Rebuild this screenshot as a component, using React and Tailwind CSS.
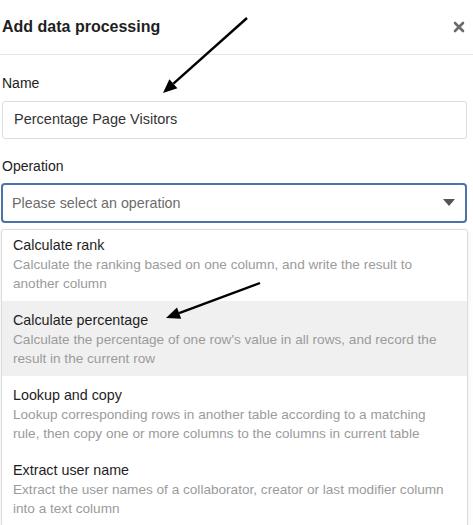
import React from 'react';

const options = [
  {
    title: 'Calculate rank',
    lines: ['Calculate the ranking based on one column, and write the result to', 'another column'],
    first: true,
  },
  {
    title: 'Calculate percentage',
    lines: ["Calculate the percentage of one row's value in all rows, and record the", 'result in the current row'],
    active: true,
  },
  {
    title: 'Lookup and copy',
    lines: ['Lookup corresponding rows in another table according to a matching', 'rule, then copy one or more columns to the columns in current table'],
  },
  {
    title: 'Extract user name',
    lines: ['Extract the user names of a collaborator, creator or last modifier column', 'into a text column'],
  },
];

const App = () => {
  return (
    <div className="relative w-[473px] h-[525px] overflow-hidden bg-white font-['Liberation_Sans',Arial,sans-serif] text-[#212529]">
      {/* Header */}
      <div className="flex items-center justify-between h-[55px] border-b border-[#e4e4e4] pl-[2px] pr-[8px]">
        <h2 className="text-[16px] font-bold text-[#1f1f1f]">Add data processing</h2>
        <svg className="w-[12px] h-[12px]" viewBox="0 0 12 12">
          <path d="M2 2L10 10M10 2L2 10" stroke="#6b6b6b" strokeWidth="2.6" strokeLinecap="round" />
        </svg>
      </div>

      {/* Form */}
      <div className="pl-[2px] pr-[6px]">
        <label className="block mt-[18px] text-[14px] leading-[20px] text-[#222]">Name</label>
        <div className="mt-[8px] h-[38px] flex items-center px-[11px] border border-[#dedede] rounded-[3px] text-[14.5px] text-[#333]">
          Percentage Page Visitors
        </div>

        <label className="block mt-[17px] text-[14px] leading-[20px] text-[#222]">Operation</label>
        <div className="mt-[7px] -ml-[1px] h-[40px] flex items-center justify-between pl-[9px] pr-[10px] border-2 border-[#4b73a6] rounded-[4px]">
          <span className="text-[14.3px] text-[#6c6c6c] mt-[1px]">Please select an operation</span>
          <svg className="w-[12px] h-[8px]" viewBox="0 0 12 8">
            <path d="M0 0H12L6 7Z" fill="#555" />
          </svg>
        </div>

        {/* content hidden behind the menu */}
        <div className="mt-[30px] border-b border-[#e4e4e4]" />
        <div className="mt-[73px] h-[200px] bg-[#ececec]" />
      </div>

      {/* Dropdown menu */}
      <div className="absolute left-[1px] top-[229px] w-[467px] bg-white border border-[#dcdcdc] rounded-[3px] shadow-[0_2px_6px_rgba(0,0,0,0.08)]">
        {options.map((o) => (
          <div
            key={o.title}
            className={`px-[11px] ${o.first ? 'pt-[6px] h-[71px]' : 'pt-[10px] h-[75px]'} ${o.active ? 'bg-[#f0f0f0]' : ''}`}
          >
            <div className="text-[14.3px] leading-[19px] text-[#1e1e1e]">{o.title}</div>
            {o.lines.map((l) => (
              <div key={l} className="text-[13.6px] leading-[19px] text-[#9b9b9b] whitespace-nowrap">{l}</div>
            ))}
          </div>
        ))}
      </div>

      {/* Annotation arrows */}
      <svg className="absolute inset-0 pointer-events-none" width="473" height="525">
        <line x1="247" y1="18" x2="173.4" y2="83.7" stroke="#000" strokeWidth="2.4" />
        <polygon points="163,93 177.4,88.2 169.4,79.2" fill="#000" />
        <line x1="260" y1="283" x2="179.1" y2="313.1" stroke="#000" strokeWidth="2.4" />
        <polygon points="166,318 181.2,318.7 177,307.5" fill="#000" />
      </svg>
    </div>
  );
};

export default App;
